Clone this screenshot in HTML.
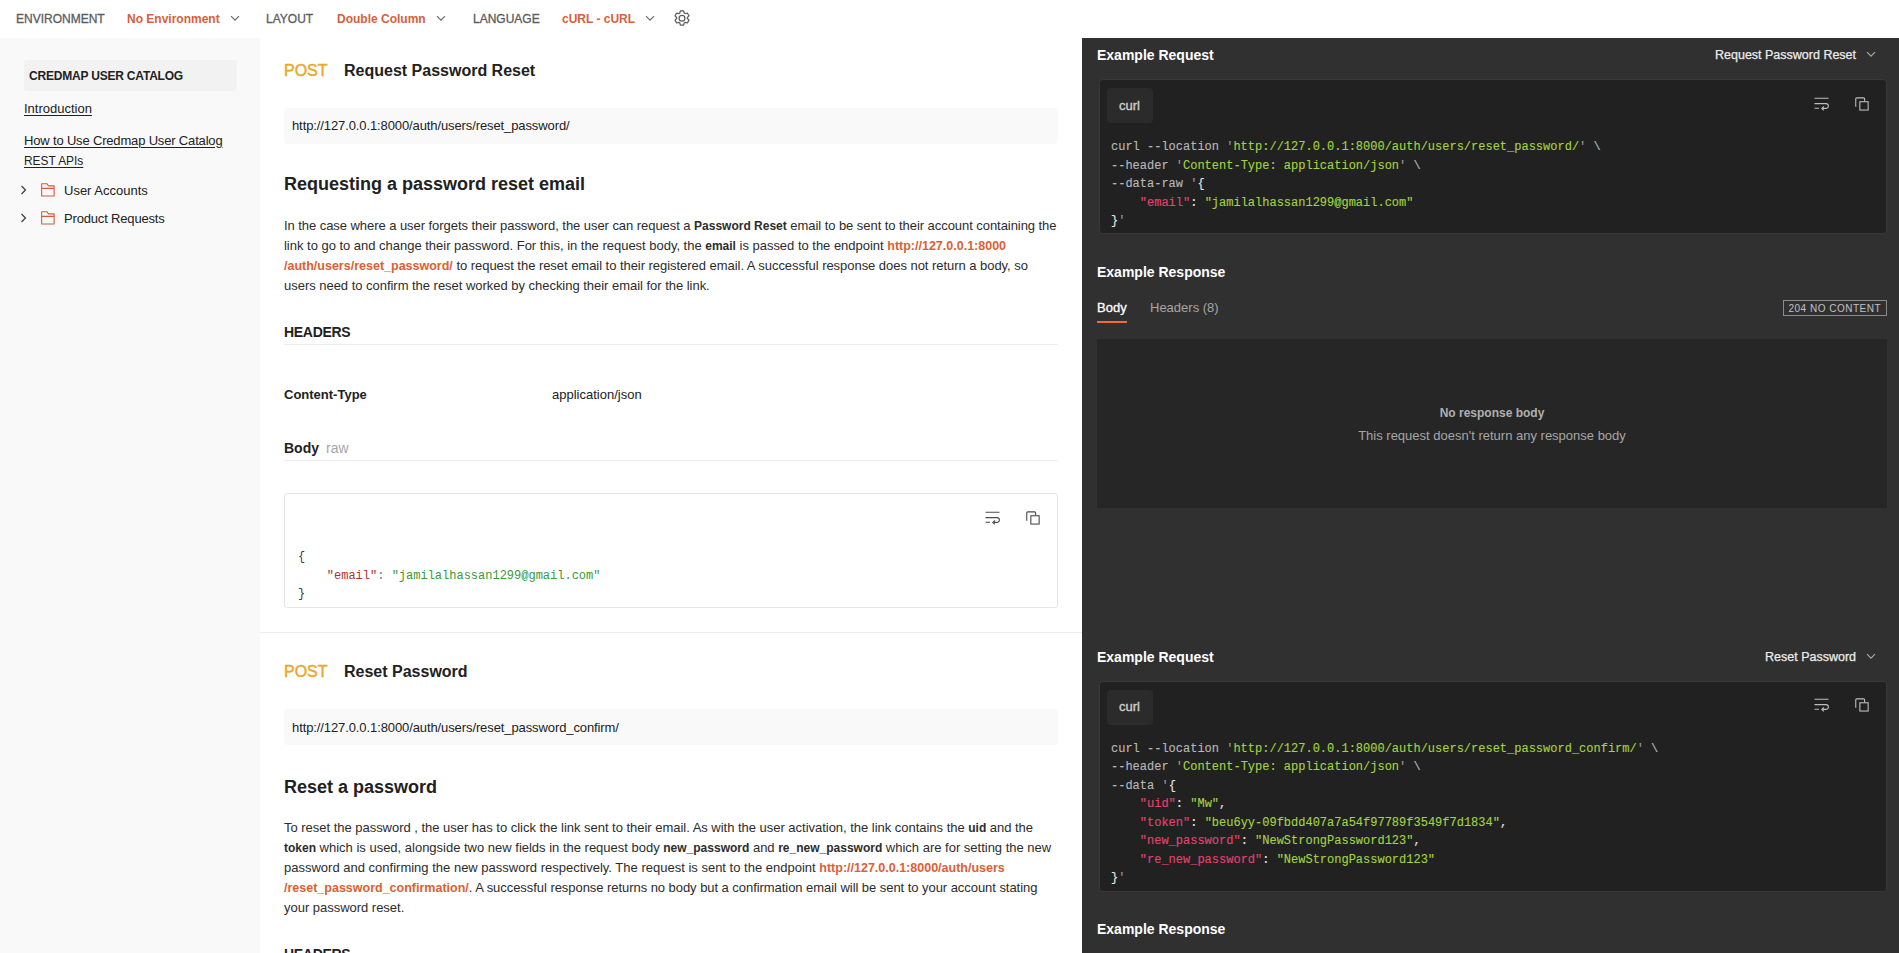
<!DOCTYPE html>
<html><head><meta charset="utf-8">
<style>
*{box-sizing:border-box;margin:0;padding:0}
html,body{width:1899px;height:953px;overflow:hidden;background:#fff}
body{position:relative;font-family:"Liberation Sans",sans-serif;color:#212121}
.a{position:absolute;white-space:pre;line-height:20px}
.b{font-weight:700}
.or{color:#dd6035}
.top{position:absolute;left:0;top:0;width:1899px;height:38px;background:#fff}
.tl{font-size:12px;color:#5c5c5c;top:9px;-webkit-text-stroke:0.3px #5c5c5c}
.tv{font-size:12px;font-weight:700;color:#d8603a;top:9px}
.chev{position:absolute}
#side{position:absolute;left:0;top:38px;width:260px;height:915px;background:#f9f9f9}
#main{position:absolute;left:260px;top:38px;width:822px;height:915px;background:#fff}
#right{position:absolute;left:1082px;top:38px;width:817px;height:915px;background:#303030}
.s13{font-size:13px}
.ul{text-decoration:underline;text-underline-offset:2px}
.urlbox{position:absolute;left:284px;width:774px;height:36px;background:#f9f9f9;border-radius:4px}
.p{font-size:13px;color:#2c2c2c}
.p b{font-size:12px;letter-spacing:0}
.p b.or{font-size:12.5px}
.hr{position:absolute;left:284px;width:774px;height:1px;background:#ededed}
.mono{font-family:"Liberation Mono",monospace;font-size:12px}
.dkcode{-webkit-text-stroke:0.12px currentColor}
.codebox{position:absolute;left:1099px;width:788px;background:#212121;border:1px solid #383838;border-radius:4px}
.pill{position:absolute;left:1107px;width:46px;height:35px;background:#2b2b2b;border-radius:4px}
.dk{color:#ffffff}
.cg{color:#b9b9b9}
.str{color:#a3d43f}
.wh{color:#e8e8e8}
.dq{color:#9a9a9a}
.key{color:#e8416f}
</style></head><body>

<!-- TOP BAR -->
<div class="top"></div>
<div class="a tl" style="left:16px">ENVIRONMENT</div>
<div class="a tv" style="left:127px">No Environment</div>
<svg class="chev" style="left:230px;top:15px" width="10" height="7" viewBox="0 0 10 7"><path d="M1 1.2 L5 5.2 L9 1.2" fill="none" stroke="#6b6b6b" stroke-width="1.2"/></svg>
<div class="a tl" style="left:266px">LAYOUT</div>
<div class="a tv" style="left:337px">Double Column</div>
<svg class="chev" style="left:436px;top:15px" width="10" height="7" viewBox="0 0 10 7"><path d="M1 1.2 L5 5.2 L9 1.2" fill="none" stroke="#6b6b6b" stroke-width="1.2"/></svg>
<div class="a tl" style="left:473px">LANGUAGE</div>
<div class="a tv" style="left:562px">cURL - cURL</div>
<svg class="chev" style="left:645px;top:15px" width="10" height="7" viewBox="0 0 10 7"><path d="M1 1.2 L5 5.2 L9 1.2" fill="none" stroke="#6b6b6b" stroke-width="1.2"/></svg>
<svg style="position:absolute;left:672.8px;top:9px" width="18" height="18" viewBox="-1 -1 18 18"><path fill="none" stroke="#5c5c5c" stroke-width="1.25" stroke-linejoin="round" d="M5.80 3.07 L6.36 0.89 L9.64 0.89 L10.20 3.07 L11.17 3.63 L13.34 3.02 L14.98 5.87 L13.37 7.44 L13.37 8.56 L14.98 10.13 L13.34 12.98 L11.17 12.37 L10.20 12.93 L9.64 15.11 L6.36 15.11 L5.80 12.93 L4.83 12.37 L2.66 12.98 L1.02 10.13 L2.63 8.56 L2.63 7.44 L1.02 5.87 L2.66 3.02 L4.83 3.63Z"/><circle cx="8" cy="8.2" r="2.9" fill="none" stroke="#5c5c5c" stroke-width="1.25"/></svg>

<!-- SIDEBAR -->
<div id="side"></div>
<div style="position:absolute;left:23.5px;top:60px;width:213.5px;height:30.5px;background:#f2f2f2;border-radius:3px"></div>
<div class="a b" style="left:29px;top:66px;font-size:12px;color:#212121;letter-spacing:-0.2px">CREDMAP USER CATALOG</div>
<div class="a s13 ul" style="left:24px;top:98.7px">Introduction</div>
<div class="a s13 ul" style="left:24px;top:130.5px;letter-spacing:-0.17px">How to Use Credmap User Catalog</div>
<div class="a s13 ul" style="left:24px;top:150.5px;transform:scaleX(0.915);transform-origin:0 0">REST APIs</div>
<svg style="position:absolute;left:19px;top:184px" width="10" height="12" viewBox="0 0 10 12"><path d="M2.5 2 L6.5 6 L2.5 10" fill="none" stroke="#3a3a3a" stroke-width="1.2"/></svg>
<svg style="position:absolute;left:40px;top:182px" width="16" height="16" viewBox="0 0 16 16"><path d="M1.65 14.05 V1.75 H7.1 L8.3 3.85 H14.15 V14.05 Z M1.65 6.4 H14.15" fill="none" stroke="#cf5f3a" stroke-width="1.1" stroke-linejoin="round"/></svg>
<div class="a s13" style="left:64px;top:181.3px">User Accounts</div>
<svg style="position:absolute;left:19px;top:212px" width="10" height="12" viewBox="0 0 10 12"><path d="M2.5 2 L6.5 6 L2.5 10" fill="none" stroke="#3a3a3a" stroke-width="1.2"/></svg>
<svg style="position:absolute;left:40px;top:210px" width="16" height="16" viewBox="0 0 16 16"><path d="M1.65 14.05 V1.75 H7.1 L8.3 3.85 H14.15 V14.05 Z M1.65 6.4 H14.15" fill="none" stroke="#cf5f3a" stroke-width="1.1" stroke-linejoin="round"/></svg>
<div class="a s13" style="left:64px;top:209.2px;letter-spacing:-0.17px">Product Requests</div>

<!-- MAIN -->
<div id="main"></div>
<div class="a" style="left:284px;top:61.3px;font-size:16px;color:#eaa92a;-webkit-text-stroke:0.5px #eaa92a">POST</div>
<div class="a b" style="left:344px;top:61.3px;font-size:16px">Request Password Reset</div>
<div class="urlbox" style="top:108px"></div>
<div class="a s13" style="left:292px;top:116px;letter-spacing:-0.105px">http://127.0.0.1:8000/auth/users/reset_password/</div>
<div class="a b" style="left:284px;top:173.8px;font-size:18px">Requesting a password reset email</div>
<div class="a p" style="left:284px;top:215.9px;letter-spacing:-0.0561px">In the case where a user forgets their password, the user can request a <b>Password Reset</b> email to be sent to their account containing the</div>
<div class="a p" style="left:284px;top:235.5px;letter-spacing:-0.0168px">link to go to and change their password. For this, in the request body, the <b>email</b> is passed to the endpoint <b class="or">http://127.0.0.1:8000</b></div>
<div class="a p" style="left:284px;top:255.5px;letter-spacing:-0.0413px"><b class="or">/auth/users/reset_password/</b> to request the reset email to their registered email. A successful response does not return a body, so</div>
<div class="a p" style="left:284px;top:275.5px;letter-spacing:-0.0270px">users need to confirm the reset worked by checking their email for the link.</div>
<div class="a b" style="left:284px;top:322.4px;font-size:14px;letter-spacing:-0.3px">HEADERS</div>
<div class="hr" style="top:344px"></div>
<div class="a b s13" style="left:284px;top:385px">Content-Type</div>
<div class="a s13" style="left:552px;top:385px">application/json</div>
<div class="a b" style="left:284px;top:437.8px;font-size:14px">Body</div>
<div class="a" style="left:326px;top:437.8px;font-size:14px;color:#a6a6a6">raw</div>
<div class="hr" style="top:460px"></div>
<div style="position:absolute;left:284px;top:493px;width:774px;height:115px;border:1px solid #e6e6e6;border-radius:3px;background:#fff"></div>
<svg style="position:absolute;left:984px;top:510px" width="17" height="16" viewBox="0 0 17 16"><path d="M1.5 2.3h14 M1.5 7.6h11.5a2.4 2.4 0 0 1 0 4.8h-3 M1.5 12.3h4.5 M10.8 10.5l-2 1.9 2 1.9" fill="none" stroke="#4a4a4a" stroke-width="1.1"/></svg>
<svg style="position:absolute;left:1024px;top:509px" width="18" height="18" viewBox="0 0 18 18"><path d="M2.75 11.7V3.85Q2.75 2.85 3.75 2.85H10.6Q11.6 2.85 11.6 3.85V6.2" fill="none" stroke="#4a4a4a" stroke-width="1.1"/><rect x="6.85" y="6.75" width="8.3" height="8.3" fill="none" stroke="#4a4a4a" stroke-width="1.1"/></svg>
<div class="a mono" style="left:298px;top:548px;line-height:18.5px;color:#3a3a3a">{
    <span style="color:#a8352b">"email"</span><span style="color:#777">:</span> <span style="color:#389a3a">"jamilalhassan1299@gmail.com"</span>
}</div>

<div style="position:absolute;left:260px;top:632px;width:822px;height:1px;background:#ededed"></div>
<div class="a" style="left:284px;top:662.3px;font-size:16px;color:#eaa92a;-webkit-text-stroke:0.5px #eaa92a">POST</div>
<div class="a b" style="left:344px;top:662.3px;font-size:16px">Reset Password</div>
<div class="urlbox" style="top:709px"></div>
<div class="a s13" style="left:292px;top:718.2px;letter-spacing:-0.1px">http://127.0.0.1:8000/auth/users/reset_password_confirm/</div>
<div class="a b" style="left:284px;top:777px;font-size:18px">Reset a password</div>
<div class="a p" style="left:284px;top:818px;letter-spacing:-0.0232px">To reset the password , the user has to click the link sent to their email. As with the user activation, the link contains the <b>uid</b> and the</div>
<div class="a p" style="left:284px;top:838.3px;letter-spacing:-0.0054px"><b>token</b> which is used, alongside two new fields in the request body <b>new_password</b> and <b>re_new_password</b> which are for setting the new</div>
<div class="a p" style="left:284px;top:858.2px;letter-spacing:0.0032px">password and confirming the new password respectively. The request is sent to the endpoint <b class="or">http://127.0.0.1:8000/auth/users</b></div>
<div class="a p" style="left:284px;top:878.3px;letter-spacing:-0.0515px"><b class="or">/reset_password_confirmation/</b>. A successful response returns no body but a confirmation email will be sent to your account stating</div>
<div class="a p" style="left:284px;top:898.2px;letter-spacing:-0.0220px">your password reset.</div>
<div class="a b" style="left:284px;top:943.5px;font-size:14px;letter-spacing:-0.3px">HEADERS</div>

<!-- RIGHT PANEL -->
<div id="right"></div>
<div class="a b dk" style="left:1097px;top:45px;font-size:14px">Example Request</div>
<div class="a" style="left:1715px;top:44.5px;font-size:12.5px;color:#ececec;-webkit-text-stroke:0.25px #ececec">Request Password Reset</div>
<svg class="chev" style="left:1866px;top:51px" width="10" height="7" viewBox="0 0 10 7"><path d="M1 1.2 L5 5.2 L9 1.2" fill="none" stroke="#a6a6a6" stroke-width="1.2"/></svg>
<div class="codebox" style="top:79px;height:155px"></div>
<div class="pill" style="top:88px"></div>
<div class="a s13" style="left:1119px;top:95.5px;color:#cfcfcf;-webkit-text-stroke:0.35px #cfcfcf">curl</div>
<svg style="position:absolute;left:1813px;top:96px" width="17" height="16" viewBox="0 0 17 16"><path d="M1.5 2.3h14 M1.5 7.6h11.5a2.4 2.4 0 0 1 0 4.8h-3 M1.5 12.3h4.5 M10.8 10.5l-2 1.9 2 1.9" fill="none" stroke="#bdbdbd" stroke-width="1.1"/></svg>
<svg style="position:absolute;left:1853px;top:95px" width="18" height="18" viewBox="0 0 18 18"><path d="M2.75 11.7V3.85Q2.75 2.85 3.75 2.85H10.6Q11.6 2.85 11.6 3.85V6.2" fill="none" stroke="#bdbdbd" stroke-width="1.1"/><rect x="6.85" y="6.75" width="8.3" height="8.3" fill="none" stroke="#bdbdbd" stroke-width="1.1"/></svg>
<div class="a mono cg dkcode" style="left:1111px;top:138px;line-height:18.5px">curl --location <span class="dq">'</span><span class="str">http://127.0.0.1:8000/auth/users/reset_password/</span><span class="dq">'</span> \
--header <span class="dq">'</span><span class="str">Content-Type: application/json</span><span class="dq">'</span> \
--data-raw <span class="dq">'</span><span class="wh">{</span>
    <span class="key">"email"</span><span class="wh">:</span> <span class="str">"jamilalhassan1299@gmail.com"</span>
<span class="wh">}</span><span class="dq">'</span></div>

<div class="a b dk" style="left:1097px;top:262px;font-size:14px">Example Response</div>
<div class="a s13 dk" style="left:1097px;top:298px;-webkit-text-stroke:0.3px #fff">Body</div>
<div style="position:absolute;left:1097px;top:321px;width:30px;height:2px;background:#f26b3a"></div>
<div class="a s13" style="left:1150px;top:298px;color:#a6a6a6">Headers (8)</div>
<div style="position:absolute;left:1783px;top:300px;width:104px;height:16px;border:1px solid #8a8a8a"></div>
<div class="a" style="left:1788.5px;top:298.5px;font-size:10px;color:#c2c2c2;letter-spacing:0.5px">204 NO CONTENT</div>
<div style="position:absolute;left:1097px;top:339px;width:790px;height:169px;background:#262626"></div>
<div class="a b" style="left:1097px;top:402.7px;width:790px;text-align:center;color:#b0b0b0;font-size:12px">No response body</div>
<div class="a s13" style="left:1097px;top:425.5px;width:790px;text-align:center;color:#a6a6a6">This request doesn't return any response body</div>

<div class="a b dk" style="left:1097px;top:647.3px;font-size:14px">Example Request</div>
<div class="a" style="left:1765px;top:646.5px;font-size:12.5px;color:#ececec;-webkit-text-stroke:0.25px #ececec">Reset Password</div>
<svg class="chev" style="left:1866px;top:653px" width="10" height="7" viewBox="0 0 10 7"><path d="M1 1.2 L5 5.2 L9 1.2" fill="none" stroke="#a6a6a6" stroke-width="1.2"/></svg>
<div class="codebox" style="top:681px;height:211px"></div>
<div class="pill" style="top:690px"></div>
<div class="a s13" style="left:1119px;top:697px;color:#cfcfcf;-webkit-text-stroke:0.35px #cfcfcf">curl</div>
<svg style="position:absolute;left:1813px;top:697px" width="17" height="16" viewBox="0 0 17 16"><path d="M1.5 2.3h14 M1.5 7.6h11.5a2.4 2.4 0 0 1 0 4.8h-3 M1.5 12.3h4.5 M10.8 10.5l-2 1.9 2 1.9" fill="none" stroke="#bdbdbd" stroke-width="1.1"/></svg>
<svg style="position:absolute;left:1853px;top:696px" width="18" height="18" viewBox="0 0 18 18"><path d="M2.75 11.7V3.85Q2.75 2.85 3.75 2.85H10.6Q11.6 2.85 11.6 3.85V6.2" fill="none" stroke="#bdbdbd" stroke-width="1.1"/><rect x="6.85" y="6.75" width="8.3" height="8.3" fill="none" stroke="#bdbdbd" stroke-width="1.1"/></svg>
<div class="a mono cg dkcode" style="left:1111px;top:739.5px;line-height:18.5px">curl --location <span class="dq">'</span><span class="str">http://127.0.0.1:8000/auth/users/reset_password_confirm/</span><span class="dq">'</span> \
--header <span class="dq">'</span><span class="str">Content-Type: application/json</span><span class="dq">'</span> \
--data <span class="dq">'</span><span class="wh">{</span>
    <span class="key">"uid"</span><span class="wh">:</span> <span class="str">"Mw"</span><span class="wh">,</span>
    <span class="key">"token"</span><span class="wh">:</span> <span class="str">"beu6yy-09fbdd407a7a54f97789f3549f7d1834"</span><span class="wh">,</span>
    <span class="key">"new_password"</span><span class="wh">:</span> <span class="str">"NewStrongPassword123"</span><span class="wh">,</span>
    <span class="key">"re_new_password"</span><span class="wh">:</span> <span class="str">"NewStrongPassword123"</span>
<span class="wh">}</span><span class="dq">'</span></div>
<div class="a b dk" style="left:1097px;top:918.5px;font-size:14px">Example Response</div>

</body></html>
